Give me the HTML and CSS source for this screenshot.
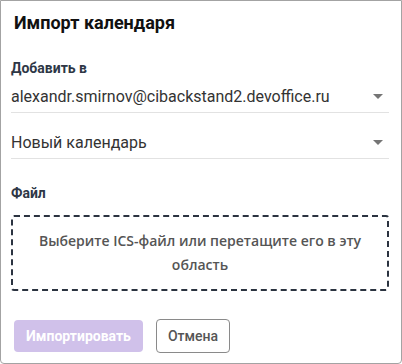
FILE: index.html
```html
<!DOCTYPE html>
<html>
<head>
    <title>Импорт календаря</title>
    <link rel="stylesheet" href="styles.css">
</head>
<body>
    <div class="dialog">
        <div class="dialog-title">Импорт календаря</div>

        <div class="field-label">Добавить в</div>
        <div class="select">
            <span>alexandr.smirnov@cibackstand2.devoffice.ru</span>
            <span class="arrow"></span>
        </div>
        <div class="select select-second">
            <span>Новый календарь</span>
            <span class="arrow"></span>
        </div>

        <div class="field-label file-label">Файл</div>
        <div class="drop-zone">Выберите ICS-файл или перетащите его в эту область</div>

        <div class="actions">
            <button class="import-btn" disabled>Импортировать</button>
            <button class="cancel-btn">Отмена</button>
        </div>
    </div>
</body>
</html>
```

FILE: styles.css
```css
* {
    box-sizing: border-box;
}
body {
    margin: 0;
    background: #fff;
    font-family: Roboto, "Noto Sans", sans-serif;
}
.dialog {
    width: 402px;
    height: 364px;
    border: 1px solid #a3a3a3;
    border-radius: 0 0 4px 4px;
    padding: 0 12px 0 10px;
}
.dialog-title {
    font-size: 18px;
    font-weight: bold;
    color: #111;
    padding: 10px 0 0 3px;
    line-height: 24px;
    height: 48px;
}
.field-label {
    font-size: 14px;
    font-weight: bold;
    color: #2e3746;
    line-height: 18px;
    margin-top: 10px;
}
.file-label {
    margin-top: 25px;
}
.select {
    display: flex;
    justify-content: space-between;
    align-items: center;
    height: 36px;
    padding-top: 3px;
    border-bottom: 1px solid #e2e2e2;
    font-size: 16px;
    color: #333;
}
.select-second {
    height: 46px;
    padding-top: 14px;
}
.arrow {
    width: 0;
    height: 0;
    border-left: 5px solid transparent;
    border-right: 5px solid transparent;
    border-top: 5px solid #757575;
    margin-right: 6px;
}
.drop-zone {
    margin-top: 13px;
    height: 76px;
    border: 2px dashed #2b3340;
    border-radius: 3px;
    display: flex;
    align-items: center;
    justify-content: center;
    text-align: center;
    padding: 0 12px;
    font-family: "Open Sans", sans-serif;
    font-size: 14px;
    font-weight: 600;
    color: #555;
    line-height: 24px;
}
.actions {
    display: flex;
    gap: 13px;
    margin-top: 28px;
    padding-left: 3px;
    align-items: center;
}
button {
    font-family: Roboto, sans-serif;
    font-size: 14px;
    border-radius: 4px;
    cursor: pointer;
}
.import-btn {
    width: 129px;
    height: 32px;
    background: #d0c1ea;
    color: #fff;
    border: none;
    font-weight: bold;
}
.cancel-btn {
    width: 74px;
    height: 34px;
    background: #fff;
    border: 1px solid #8a8a8a;
    color: #555;
    font-weight: 500;
}
```
